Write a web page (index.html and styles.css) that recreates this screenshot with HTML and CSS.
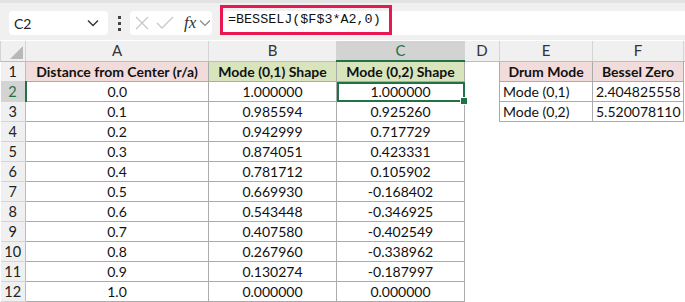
FILE: index.html
```html
<!DOCTYPE html>
<html lang="en">
<head>
    <meta charset="UTF-8">
    <title>BESSELJ</title>
    <link rel="stylesheet" href="styles.css">
</head>
<body>
    <div class="toolbar">
        <div class="name-box">
            <span>C2</span>
            <svg width="12" height="8" viewBox="0 0 12 8"><path d="M1 1.5 L6 6.5 L11 1.5" fill="none" stroke="#333" stroke-width="1.4"/></svg>
        </div>
        <div class="dots">
            <i></i><i></i><i></i>
        </div>
        <div class="fx-box">
            <svg width="16" height="16" viewBox="0 0 16 16"><path d="M2 2 L14 14 M14 2 L2 14" stroke="#c8c8c8" stroke-width="1.3"/></svg>
            <svg width="18" height="16" viewBox="0 0 18 16"><path d="M1 8 L6 13 L17 2" fill="none" stroke="#c8c8c8" stroke-width="1.3"/></svg>
            <span class="fx">fx</span>
            <svg width="12" height="8" viewBox="0 0 12 8"><path d="M1 1.5 L6 6.5 L11 1.5" fill="none" stroke="#888" stroke-width="1.2"/></svg>
        </div>
        <div class="formula-bar">
            <div class="formula">=BESSELJ($F$3*A2,0)</div>
        </div>
    </div>

    <table class="sheet">
        <colgroup>
            <col class="c-rh"><col class="c-a"><col class="c-b"><col class="c-c">
            <col class="c-d"><col class="c-e"><col class="c-f"><col>
        </colgroup>
        <tr class="col-heads">
            <th class="corner"><span class="tri"></span></th>
            <th>A</th><th>B</th><th class="sel">C</th><th>D</th><th>E</th><th>F</th><th></th>
        </tr>
        <tr>
            <th class="rh">1</th>
            <td class="b pink">Distance from Center (r/a)</td>
            <td class="b green">Mode (0,1) Shape</td>
            <td class="b green">Mode (0,2) Shape</td>
            <td class="gap"></td>
            <td class="b pink">Drum Mode</td>
            <td class="b pink">Bessel Zero</td>
            <td class="gap"></td>
        </tr>
        <tr>
            <th class="rh sel">2</th>
            <td>0.0</td><td>1.000000</td><td class="active">1.000000<span class="handle"></span></td>
            <td class="gap"></td><td class="l">Mode (0,1)</td><td class="r">2.404825558</td><td class="gap"></td>
        </tr>
        <tr>
            <th class="rh">3</th>
            <td>0.1</td><td>0.985594</td><td>0.925260</td>
            <td class="gap"></td><td class="l">Mode (0,2)</td><td class="r">5.520078110</td><td class="gap"></td>
        </tr>
        <tr><th class="rh">4</th><td>0.2</td><td>0.942999</td><td>0.717729</td><td class="gap" colspan="4"></td></tr>
        <tr><th class="rh">5</th><td>0.3</td><td>0.874051</td><td>0.423331</td><td class="gap" colspan="4"></td></tr>
        <tr><th class="rh">6</th><td>0.4</td><td>0.781712</td><td>0.105902</td><td class="gap" colspan="4"></td></tr>
        <tr><th class="rh">7</th><td>0.5</td><td>0.669930</td><td>-0.168402</td><td class="gap" colspan="4"></td></tr>
        <tr><th class="rh">8</th><td>0.6</td><td>0.543448</td><td>-0.346925</td><td class="gap" colspan="4"></td></tr>
        <tr><th class="rh">9</th><td>0.7</td><td>0.407580</td><td>-0.402549</td><td class="gap" colspan="4"></td></tr>
        <tr><th class="rh">10</th><td>0.8</td><td>0.267960</td><td>-0.338962</td><td class="gap" colspan="4"></td></tr>
        <tr><th class="rh">11</th><td>0.9</td><td>0.130274</td><td>-0.187997</td><td class="gap" colspan="4"></td></tr>
        <tr><th class="rh">12</th><td>1.0</td><td>0.000000</td><td>0.000000</td><td class="gap" colspan="4"></td></tr>
    </table>
</body>
</html>
```

FILE: styles.css
```css
body {
    margin: 0;
    background: #ffffff;
    font-family: Lato, "Open Sans", sans-serif;
    width: 685px;
    height: 302px;
    overflow: hidden;
}

/* formula toolbar */
.toolbar {
    height: 40px;
    background: #f0f0f0;
    border-top: 3px solid #e2e2e2;
    box-sizing: border-box;
    display: flex;
    align-items: center;
    padding-left: 9px;
}

.name-box {
    width: 99px;
    height: 24px;
    box-sizing: border-box;
    background: #ffffff;
    border-radius: 4px;
    display: flex;
    align-items: center;
    justify-content: space-between;
    padding: 0 9px 0 5px;
    font-size: 14px;
    color: #222;
    margin-top: 3px;
}

.dots {
    width: 22px;
    display: flex;
    flex-direction: column;
    align-items: center;
    gap: 3px;
    margin-top: 3px;
}

.dots i {
    width: 3px;
    height: 3px;
    background: #444;
    display: block;
}

.fx-box {
    width: 82px;
    height: 24px;
    box-sizing: border-box;
    background: #ffffff;
    border-radius: 4px;
    display: flex;
    align-items: center;
    gap: 6px;
    padding-left: 4px;
    margin-top: 3px;
}

.fx {
    font-family: "Liberation Serif", serif;
    font-style: italic;
    font-size: 17px;
    color: #333;
    margin-left: 4px;
    margin-right: -3px;
}

.formula-bar {
    flex: 1;
    height: 24px;
    margin-left: 9px;
    margin-top: 3px;
    background: #ffffff;
    position: relative;
}

.formula {
    position: absolute;
    left: -1px;
    top: -6px;
    width: 172px;
    height: 30px;
    box-sizing: border-box;
    border: 3px solid #e8174f;
    font-family: "Liberation Mono", monospace;
    font-size: 13.4px;
    line-height: 24px;
    padding-left: 5px;
    color: #111;
}

/* grid */
.sheet {
    border-collapse: collapse;
    table-layout: fixed;
    width: 685px;
    margin-top: 1px;
    font-size: 14px;
}

.c-rh { width: 25px; }
.c-a { width: 183px; }
.c-b { width: 128px; }
.c-c { width: 128px; }
.c-d { width: 35px; }
.c-e { width: 93px; }
.c-f { width: 91px; }

.sheet td,
.sheet th {
    height: 19px;
    padding: 0 3px;
    line-height: 19px;
    white-space: nowrap;
    overflow: hidden;
}

.sheet td {
    border: 1px solid #ababab;
    text-align: center;
    color: #111;
}

.sheet td.gap {
    border: none;
}

.col-heads th {
    background: #f0f0f0;
    font-weight: normal;
    color: #333;
    border-left: 1px solid #d4d4d4;
    border-bottom: 1px solid #bdbdbd;
    height: 18px;
    font-size: 15px;
}

.col-heads th.sel {
    background: #d3d3d3;
    border-bottom: 2px solid #217346;
    color: #217346;
}

.corner {
    position: relative;
}

.tri {
    position: absolute;
    right: 2px;
    bottom: 2px;
    width: 0;
    height: 0;
    border-left: 13px solid transparent;
    border-bottom: 13px solid #b8b8b8;
}

.rh {
    background: #f0f0f0;
    font-weight: normal;
    color: #222;
    text-align: center;
    border-bottom: 1px solid #d4d4d4;
    border-right: 1px solid #bdbdbd;
    font-size: 14.5px;
}

.rh.sel {
    background: #d3d3d3;
    color: #217346;
    border-right: 2px solid #217346;
}

.b {
    font-weight: bold;
}

.pink {
    background: #f2dcdb;
}

.green {
    background: #d8e4bc;
}

.sheet td.l {
    text-align: left;
}

.sheet td.r {
    text-align: right;
}

.sheet td.active {
    position: relative;
    outline: 2px solid #217346;
    outline-offset: -2px;
    overflow: visible;
}

.handle {
    position: absolute;
    right: -4px;
    bottom: -4px;
    width: 6px;
    height: 6px;
    background: #217346;
    border: 1px solid #ffffff;
}
```
